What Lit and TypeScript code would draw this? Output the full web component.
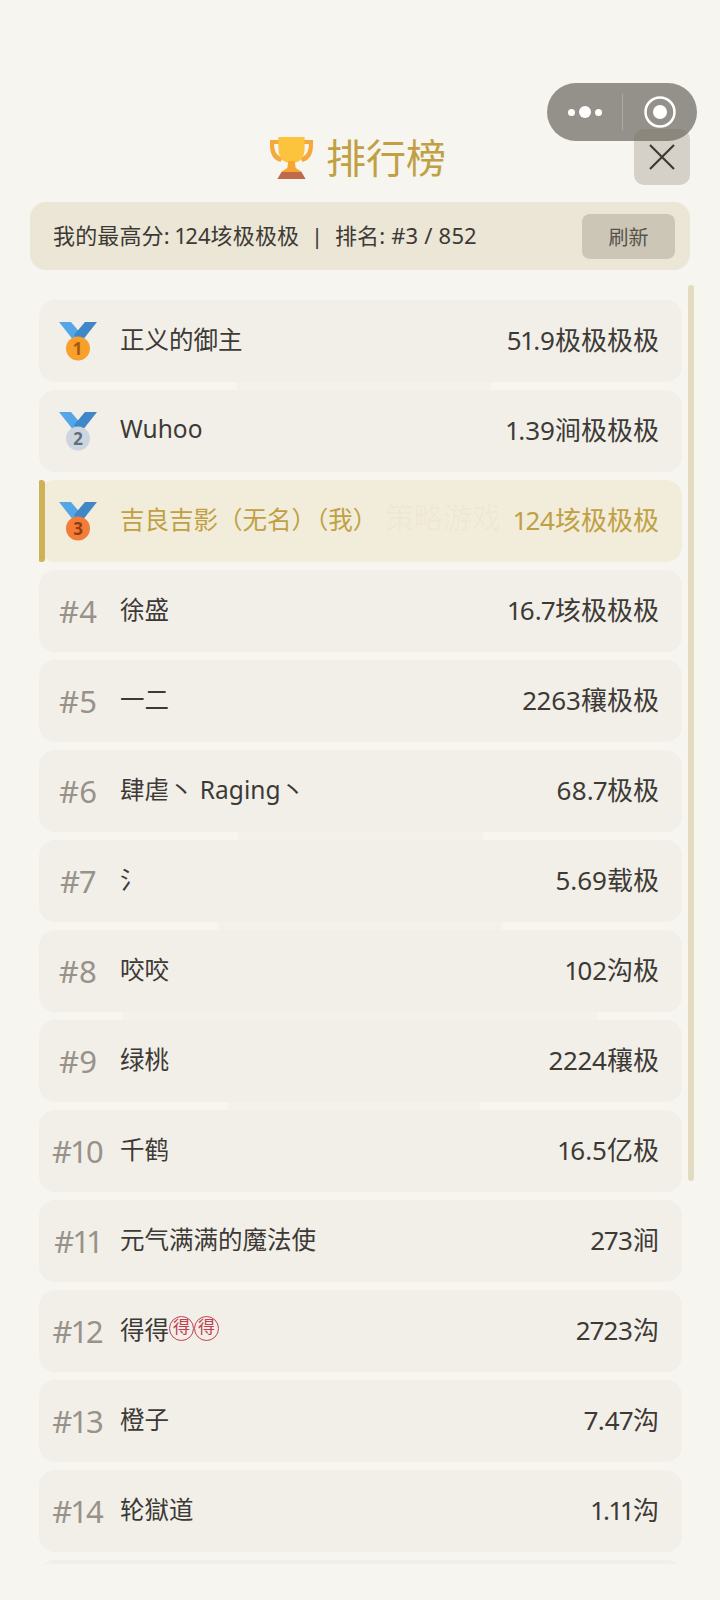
import { LitElement, html, css, svg } from 'lit';
import { customElement } from 'lit/decorators.js';

const rows = [
  { name: '正义的御主', score: '51.9极极极极' },
  { name: 'Wuhoo', score: '1.39涧极极极' },
  { name: '吉良吉影（无名）（我）', score: '124垓极极极', me: true },
  { name: '徐盛', score: '16.7垓极极极' },
  { name: '一二', score: '2263穰极极' },
  { name: '肆虐丶 Raging丶', score: '68.7极极' },
  { name: '氵', score: '5.69载极' },
  { name: '咬咬', score: '102沟极' },
  { name: '绿桃', score: '2224穰极' },
  { name: '千鹤', score: '16.5亿极' },
  { name: '元气满满的魔法使', score: '273涧' },
  { name: '得得', score: '2723沟', seals: 2 },
  { name: '橙子', score: '7.47沟' },
  { name: '轮獄道', score: '1.11沟' },
];

// the dialog underneath shows through the gaps between the rows
const ghosts = [
  { x: 237, y: 375, w: 253, h: 24 },
  { x: 238, y: 825, w: 245, h: 24 },
  { x: 218, y: 915, w: 284, h: 24 },
  { x: 123, y: 1005, w: 474, h: 24 },
  { x: 228, y: 1095, w: 252, h: 24 },
];

const medalColors = [
  { disc: '#f9a02c', digit: '#a8590d' },
  { disc: '#cdd6de', digit: '#5f6f80' },
  { disc: '#f47c36', digit: '#8f3d10' },
];

function medal(rank: number) {
  const c = medalColors[rank - 1];
  return html`<svg class="medal" viewBox="0 0 40 40" width="40" height="40">
    ${svg`<path d="M1 1h12l11 13-5 6h-3z" fill="#55a6e6"/>
    <path d="M39 1H27L16 14l4 6h4z" fill="#3f87c7"/>
    <circle cx="20" cy="27.500" r="12" fill="${c.disc}"/>
    <text x="20" y="33.500" text-anchor="middle" font-size="17" font-weight="700" font-family="Noto Sans, sans-serif" fill="${c.digit}">${rank}</text>`}
  </svg>`;
}

@customElement('app-root')
export class AppRoot extends LitElement {
  static styles = css`
    :host {
      display: block;
      position: relative;
      height: 1600px;
      overflow: hidden;
      background: #f7f5f0;
      font-family: 'Noto Sans', 'Noto Sans CJK SC', sans-serif;
      font-variant-numeric: proportional-nums;
      color: #3d3a36;
    }
    .page {
      position: relative;
      padding: 136px 30px 0;
    }
    .title {
      display: flex;
      align-items: center;
      justify-content: center;
      gap: 13px;
      height: 44px;
      margin: 0 0 22px;
      padding-right: 4px;
      font-size: 40px;
      color: #c0a043;
      line-height: 44px;
    }
    .summary {
      display: flex;
      align-items: center;
      justify-content: space-between;
      height: 68px;
      box-sizing: border-box;
      padding: 0 15px 0 23px;
      border-radius: 16px;
      background: #ebe6d5;
      font-size: 22px;
    }
    .summary span {
      padding-bottom: 4px;
      letter-spacing: 0.15px;
    }
    .refresh {
      width: 93px;
      height: 45px;
      border-radius: 8px;
      background: #cbc6b6;
      color: #57534c;
      font-size: 20px;
      display: flex;
      align-items: center;
      justify-content: center;
    }
    .list {
      margin: 30px 8px 0 9px;
      height: 1264px;
      overflow: hidden;
      display: flex;
      flex-direction: column;
      gap: 8px;
    }
    .row {
      flex: none;
      position: relative;
      height: 82px;
      box-sizing: border-box;
      padding: 0 23px 0 0;
      display: flex;
      align-items: center;
      border-radius: 16px;
      background: #f2efe9;
    }
    .row.me {
      background: #f2ecda;
      color: #c0a043;
    }
    .row.me::before {
      content: '';
      position: absolute;
      left: -1px;
      top: 0;
      bottom: 0;
      width: 7px;
      border-radius: 4px;
      background: #cdb257;
    }
    .rank {
      flex: none;
      width: 81px;
      padding-right: 3px;
      box-sizing: border-box;
      font-size: 31px;
      color: #98928a;
      display: flex;
      align-items: center;
      justify-content: center;
    }
    .name {
      flex: 1;
      font-size: 24.500px;
      display: flex;
      align-items: center;
      padding-bottom: 5px;
    }
    .score {
      font-size: 26px;
      padding-bottom: 5px;
    }
    .seal {
      width: 25px;
      height: 25px;
      box-sizing: border-box;
      border: 1.500px solid #c2404f;
      border-radius: 50%;
      color: #c2404f;
      font-size: 17px;
      line-height: 20px;
      text-align: center;
    }
    .ghost {
      position: absolute;
      background: #f4f1eb;
    }
    .ghost-text {
      position: absolute;
      left: 385px;
      top: 497px;
      font-size: 29px;
      line-height: 42px;
      color: rgba(120, 100, 60, 0.04);
    }
    .scrollbar {
      position: absolute;
      left: 688px;
      top: 285px;
      width: 6px;
      height: 896px;
      border-radius: 3px;
      background: #e3dbc0;
    }
    .capsule {
      position: absolute;
      left: 547px;
      top: 83px;
      width: 150px;
      height: 58px;
      border-radius: 29px;
      background: rgba(120, 117, 110, 0.78);
      display: flex;
      align-items: center;
    }
    .capsule .more {
      width: 75px;
      display: flex;
      justify-content: center;
      align-items: center;
      gap: 4px;
    }
    .dot {
      width: 7px;
      height: 7px;
      border-radius: 50%;
      background: #fff;
    }
    .dot.big {
      width: 12px;
      height: 12px;
    }
    .capsule .sep {
      width: 1px;
      height: 36px;
      background: rgba(255, 255, 255, 0.25);
    }
    .capsule .target {
      flex: 1;
      display: flex;
      justify-content: center;
    }
    .close {
      position: absolute;
      left: 634px;
      top: 129px;
      width: 56px;
      height: 56px;
      border-radius: 10px;
      background: rgba(120, 107, 85, 0.26);
      display: flex;
      align-items: center;
      justify-content: center;
    }
  `;

  render() {
    return html`
      ${ghosts.map((g) => html`<div
        class="ghost"
        style="left:${g.x}px;top:${g.y}px;width:${g.w}px;height:${g.h}px"
      ></div>`)}
      <div class="page">
        <div class="title">
          <svg width="43" height="42" viewBox="0 0 41 42" preserveAspectRatio="none">
            <path d="M0 3h41v5c0 9-3 15-10 17l-2-4c5-2 8-6 8-13V7H4v1c0 7 3 11 8 13l-2 4C3 23 0 17 0 8z" fill="#f5a93a"/>
            <path d="M8 0h25v11c0 9-4 15-12.500 15S8 20 8 11z" fill="#fcc33d"/>
            <path d="M17.500 24h6l1 7 6 4h-20l6-4z" fill="#f4a62f"/>
            <path d="M11 35h19l4 7H7z" fill="#bf6a4a"/>
          </svg>
          <span>排行榜</span>
        </div>
        <div class="summary">
          <span>我的最高分: 124垓极极极 &nbsp;|&nbsp; 排名: #3 / 852</span>
          <div class="refresh">刷新</div>
        </div>
        <div class="list">
          ${rows.map((r, i) => html`
            <div class="row ${r.me ? 'me' : ''}">
              <div class="rank">${i < 3 ? medal(i + 1) : `#${i + 1}`}</div>
              <div class="name">
                ${r.name}
                ${Array.from({ length: r.seals ?? 0 }, () => html`<span class="seal">得</span>`)}
              </div>
              <div class="score">${r.score}</div>
            </div>
          `)}
          <div class="row"></div>
        </div>
      </div>
      <div class="ghost-text">策略游戏</div>
      <div class="scrollbar"></div>
      <div class="capsule">
        <div class="more"><i class="dot"></i><i class="dot big"></i><i class="dot"></i></div>
        <div class="sep"></div>
        <div class="target">
          <svg width="32" height="32" viewBox="0 0 32 32">
            <circle cx="16" cy="16" r="14.500" fill="none" stroke="#fff" stroke-width="2.500"/>
            <circle cx="16" cy="16" r="7" fill="#fff"/>
          </svg>
        </div>
      </div>
      <div class="close">
        <svg width="26" height="26" viewBox="0 0 26 26">
          <path d="M1 1l24 24M25 1L1 25" stroke="#3d3a36" stroke-width="2.200" fill="none"/>
        </svg>
      </div>
    `;
  }
}
